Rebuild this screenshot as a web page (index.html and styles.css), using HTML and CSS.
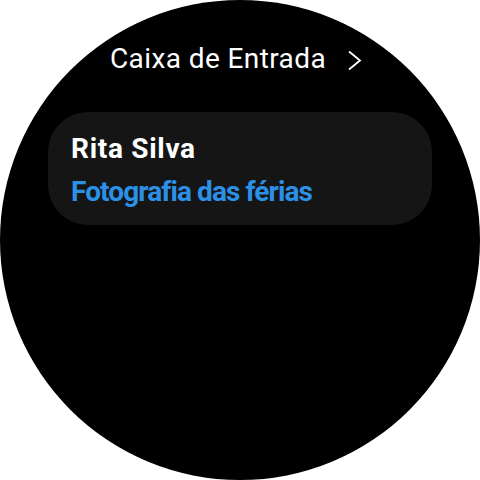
FILE: index.html
```html
<!DOCTYPE html>
<html lang="pt-PT">

<head>
  <meta charset="UTF-8" />
  <meta name="viewport" content="width=device-width, initial-scale=1.0">
  <title>Caixa de Entrada</title>
  <link rel="stylesheet" href="styles.css">
</head>

<body>

  <div id="relogio">
    <div id="cabecalho">
      <span class="titulo">Caixa de Entrada</span>
      <svg class="seta" width="15" height="21" viewBox="0 0 15 21">
        <path d="M2 1.5 L13 10.5 L2 19.5" fill="none" stroke="#ffffff" stroke-width="1.8" />
      </svg>
    </div>

    <div class="mensagem">
      <div class="remetente">Rita Silva</div>
      <div class="assunto">Fotografia das férias</div>
    </div>
  </div>

</body>

</html>
```

FILE: styles.css
```css
body {
  font-family: Roboto, "Noto Sans", sans-serif;
  margin: 0;
  padding: 0;
  background: #ffffff;
}

#relogio {
  width: 480px;
  height: 480px;
  border-radius: 50%;
  background: #000000;
  overflow: hidden;
  display: flex;
  flex-direction: column;
  align-items: center;
  padding-top: 43px;
  box-sizing: border-box;
}

#cabecalho {
  display: flex;
  align-items: center;
  gap: 21px;
  color: #ffffff;
  margin-left: -8px;
}

.titulo {
  font-size: 28px;
  line-height: 32px;
  letter-spacing: 0.4px;
}

.seta {
  margin-top: 2px;
}

.mensagem {
  width: 384px;
  height: 113px;
  box-sizing: border-box;
  margin-top: 37px;
  padding: 20px 23px 0;
  background: #151515;
  border-radius: 40px;
}

.remetente {
  color: #ffffff;
  font-size: 28px;
  font-weight: bold;
  line-height: 34px;
  letter-spacing: 0.7px;
}

.assunto {
  color: #2b90e6;
  font-size: 28px;
  font-weight: bold;
  line-height: 34px;
  letter-spacing: -0.9px;
  margin-top: 9px;
}
```
